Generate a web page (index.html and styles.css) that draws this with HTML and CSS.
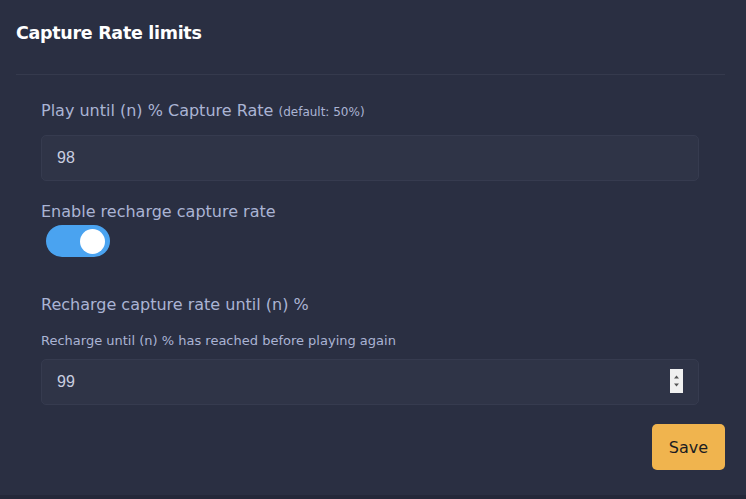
FILE: index.html
```html
<!DOCTYPE html>
<html>
<head>
<meta charset="utf-8">
<link rel="stylesheet" href="styles.css">
</head>
<body>
<div class="page">
  <div class="card">
    <h2 class="title">Capture Rate limits</h2>
    <div class="divider"></div>
    <div class="body">
      <div class="field">
        <label class="label">Play until (n) % Capture Rate <span class="small">(default: 50%)</span></label>
        <input class="input" type="number" value="98">
      </div>
      <div class="field toggle-field">
        <label class="label">Enable recharge capture rate</label>
        <div class="switch"><div class="knob"></div></div>
      </div>
      <div class="field recharge">
        <label class="label">Recharge capture rate until (n) %</label>
        <div class="help">Recharge until (n) % has reached before playing again</div>
        <div class="input-wrap">
          <input class="input" type="number" value="99">
          <div class="spinner">
            <svg width="13" height="24" viewBox="0 0 13 24"><path d="M4 9.5 L6.5 6.5 L9 9.5 Z" fill="#555"/><path d="M4 14.5 L6.5 17.5 L9 14.5 Z" fill="#555"/></svg>
          </div>
        </div>
      </div>
      <div class="actions">
        <button class="save">Save</button>
      </div>
    </div>
  </div>
  <div class="footer"></div>
</div>
</body>
</html>
```
FILE: styles.css
```css
* { box-sizing: border-box; }
html, body { margin: 0; padding: 0; }
body {
  background: #2a2f42;
  font-family: "DejaVu Sans", sans-serif;
  width: 746px;
  height: 499px;
  overflow: hidden;
}
.page {
  height: 499px;
  display: flex;
  flex-direction: column;
}
.card {
  flex: 1;
  padding: 0 21px 0 16px;
}
.title {
  margin: 0;
  padding-top: 21px;
  height: 74px;
  font-size: 17.5px;
  font-weight: 700;
  color: #ffffff;
  line-height: 24px;
  letter-spacing: -0.3px;
}
.divider {
  height: 1px;
  background: #353a4d;
}
.body {
  padding: 24px 26px 0 25px;
}
.field {
  display: flex;
  flex-direction: column;
}
.label {
  color: #aab4d4;
  font-size: 16px;
  line-height: 24px;
  margin-bottom: 11px;
}
.small {
  font-size: 12px;
}
.input-wrap {
  position: relative;
  display: flex;
  flex-direction: column;
}
.input {
  height: 46px;
  background: #2f3447;
  border: 1px solid #363b4f;
  border-radius: 5px;
  color: #c9cee0;
  font-family: "Liberation Sans", Arial, sans-serif;
  font-size: 16px;
  padding: 0 15px;
  outline: none;
}
.input::-webkit-inner-spin-button,
.input::-webkit-outer-spin-button {
  -webkit-appearance: none;
  margin: 0;
}
.spinner {
  position: absolute;
  right: 16px;
  top: 10px;
  width: 13px;
  height: 24px;
  background: #f0f0f0;
}
.spinner svg { display: block; }
.toggle-field {
  margin-top: 19px;
}
.toggle-field .label {
  margin-bottom: 1px;
}
.switch {
  margin-left: 5px;
  width: 64px;
  height: 32px;
  border-radius: 16px;
  background: #4aa3f0;
  display: flex;
  align-items: center;
  justify-content: flex-end;
  padding-right: 5px;
}
.knob {
  width: 25px;
  height: 25px;
  border-radius: 50%;
  background: #ffffff;
}
.recharge {
  margin-top: 36px;
}
.recharge .label {
  margin-bottom: 15px;
}
.help {
  color: #aab4d4;
  font-size: 13px;
  line-height: 18px;
  margin-bottom: 9px;
}
.actions {
  display: flex;
  justify-content: flex-end;
  margin-top: 19px;
  margin-right: -26px;
}
.save {
  width: 73px;
  height: 46px;
  background: #f0b44e;
  border: none;
  border-radius: 5px;
  color: #1a1c22;
  font-family: "DejaVu Sans", sans-serif;
  font-size: 16px;
}
.footer {
  height: 4px;
  background: #242839;
}
```
